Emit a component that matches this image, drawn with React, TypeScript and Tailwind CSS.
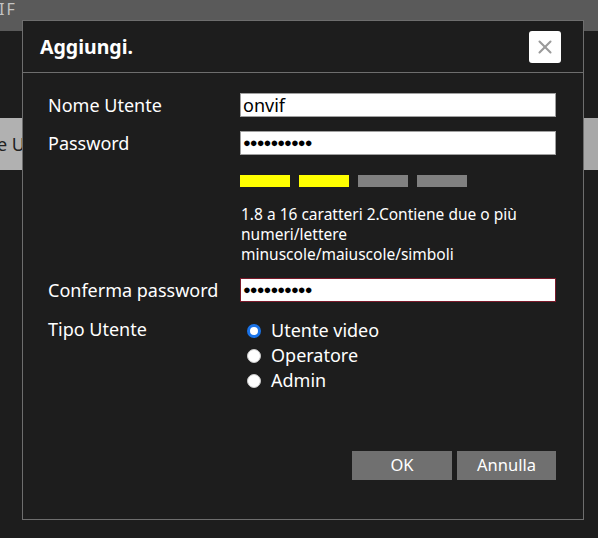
import { X } from "lucide-react";

function Radio({ checked, label }: { checked?: boolean; label: string }) {
  return (
    <label className="flex h-[25px] items-center gap-[10px]">
      {checked ? (
        <span className="ml-[7px] h-[14px] w-[14px] rounded-full border-[3px] border-[#1a73e8] bg-white" />
      ) : (
        <span className="ml-[7px] h-[14px] w-[14px] rounded-full border border-[#c8c8c8] bg-white" />
      )}
      <span>{label}</span>
    </label>
  );
}

export default function App() {
  const font = { fontFamily: '"Noto Sans", "Open Sans", sans-serif' };
  return (
    <main className="relative h-[538px] w-[598px] overflow-hidden bg-[#1d1d1d]" style={font}>
      {/* page behind the modal */}
      <div className="h-[31px] bg-[#5a5a5a] text-[16px] leading-[19px] tracking-[2px] text-[#c4c4c4]">
        <span className="-ml-[1px]">IF</span>
      </div>
      <div className="mt-[87px] flex h-[52px] justify-between">
        <div className="flex w-[22px] items-center overflow-hidden whitespace-nowrap bg-[#b1b1b1] text-[18px] text-[#222]">
          <span className="-ml-[3px]">e Ut</span>
        </div>
        <div className="w-[14px] bg-[#a8a8a8]" />
      </div>

      {/* modal */}
      <div className="absolute left-[22px] top-[20px] flex h-[500px] w-[562px] flex-col border border-[#6e6e6e] bg-[#1d1d1d] text-white">
        <div className="flex h-[52px] items-center justify-between border-b border-[#6e6e6e] pl-[17px] pr-[22px]">
          <h2 className="text-[19.5px] font-bold">Aggiungi.</h2>
          <button className="flex h-[32px] w-[32px] items-center justify-center rounded-[3px] bg-white text-[#9a9a9a]">
            <X size={22} strokeWidth={2.25} />
          </button>
        </div>

        <div className="flex flex-1 flex-col pl-[25px] pr-[27px] pt-[20px] text-[18px]">
          <div className="flex h-[24px] items-center">
            <span className="w-[192px]">Nome Utente</span>
            <div className="flex h-[24px] flex-1 items-center border border-[#a0a0a0] bg-white px-[2px] text-black">
              onvif
            </div>
          </div>

          <div className="mt-[14px] flex h-[24px] items-center">
            <span className="w-[192px]">Password</span>
            <div className="flex h-[24px] flex-1 items-center border border-[#a0a0a0] bg-white px-[2px] text-[13px] tracking-[-1px] text-black">
              ●●●●●●●●●●
            </div>
          </div>

          <div className="ml-[192px] mt-[20px] flex gap-[9px]">
            <span className="h-[12px] w-[50px] bg-[#ffff00]" />
            <span className="h-[12px] w-[50px] bg-[#ffff00]" />
            <span className="h-[12px] w-[50px] bg-[#808080]" />
            <span className="h-[12px] w-[50px] bg-[#808080]" />
          </div>

          <p className="ml-[193px] mt-[17px] w-[300px] text-[15.5px] leading-[20px]">
            1.8 a 16 caratteri 2.Contiene due o più numeri/lettere minuscole/maiuscole/simboli
          </p>

          <div className="mt-[14px] flex h-[24px] items-center">
            <span className="w-[192px]">Conferma password</span>
            <div className="flex h-[24px] flex-1 items-center border border-[#7a1a2a] bg-white px-[2px] text-[13px] tracking-[-1px] text-black">
              ●●●●●●●●●●
            </div>
          </div>

          <div className="mt-[15px] flex">
            <span className="w-[192px] leading-[25px]">Tipo Utente</span>
            <div className="mt-[1px] flex flex-col">
              <Radio checked label="Utente video" />
              <Radio label="Operatore" />
              <Radio label="Admin" />
            </div>
          </div>

          <div className="mt-auto mb-[39px] flex justify-end gap-[5px] text-[16.5px]">
            <button className="h-[29px] w-[100px] bg-[#707070] text-white">OK</button>
            <button className="h-[29px] w-[99px] bg-[#707070] text-white">Annulla</button>
          </div>
        </div>
      </div>
    </main>
  );
}
